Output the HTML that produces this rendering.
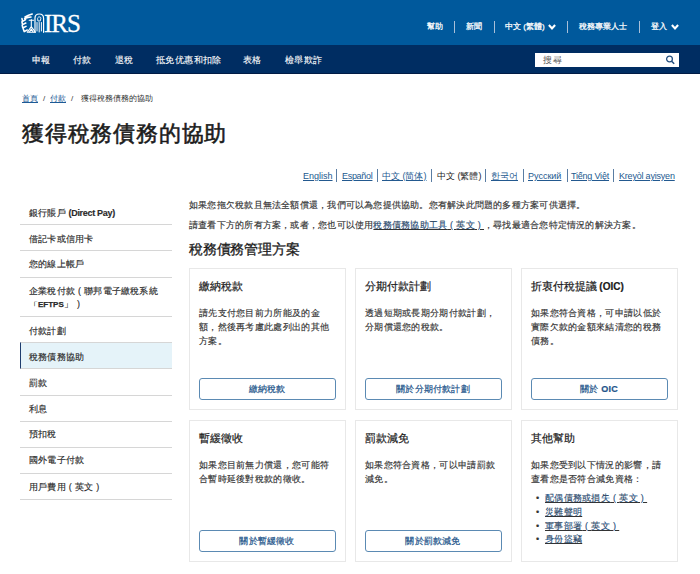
<!DOCTYPE html>
<html lang="zh-Hant">
<head>
<meta charset="utf-8">
<style>
*{box-sizing:border-box;margin:0;padding:0}
html,body{width:700px;height:574px;overflow:hidden;background:#fff}
body{font-family:"Liberation Sans",sans-serif;color:#1b1b1b;position:relative}
.a{position:absolute;white-space:nowrap;line-height:1}
.fw{letter-spacing:0.4px}
#hdr{position:absolute;left:0;top:0;width:700px;height:45px;background:#00599c}
#nav{position:absolute;left:0;top:45px;width:700px;height:29px;background:#002d62;border-bottom:1px solid #001b45}
.hl{color:#fff;font-size:8px;top:23px;-webkit-text-stroke:0.25px #fff}
.sep{position:absolute;top:21px;width:1px;height:12px;background:#a9bfd8}
.nl{color:#fff;font-size:9px;letter-spacing:0.4px;top:56px;-webkit-text-stroke:0.1px #fff}
#search{position:absolute;left:535px;top:53px;width:144px;height:14px;background:#fff}
.bc{font-size:8px;top:95px;color:#333}
.lnk{color:#1d5a96;text-decoration:underline;text-underline-offset:1px}
#title{left:22px;top:123px;font-size:22px;letter-spacing:0.8px;color:#1b1b1b;-webkit-text-stroke:0.55px #1b1b1b}
.lang{top:172px;font-size:9px;color:#23598f;text-decoration:underline}
.lsep{position:absolute;top:169px;width:1px;height:13px;background:#5a7da3}
.sl{position:absolute;left:20px;width:152px;height:1px;background:#d6d6d6}
.si{left:29px;font-size:9px;letter-spacing:0.2px;color:#2a2a2a;-webkit-text-stroke:0.15px #2a2a2a}
.p{font-size:9px;letter-spacing:0.22px;color:#333;-webkit-text-stroke:0.15px #333}
.card{position:absolute;width:157px;height:142px;border:1px solid #e8e8e8;background:#fff}
.ct{position:absolute;left:9px;top:11.5px;font-size:11px;letter-spacing:-0.1px;line-height:1;color:#1b1b1b;white-space:nowrap;-webkit-text-stroke:0.2px #1b1b1b}
.cb{position:absolute;left:9px;top:38px;font-size:9px;letter-spacing:0.3px;line-height:13.8px;color:#333;white-space:nowrap;-webkit-text-stroke:0.15px #333}
.btn{position:absolute;left:8.5px;top:109px;width:137px;height:22px;border:1.5px solid #5b8ab3;border-radius:3px;font-size:9px;letter-spacing:0.2px;color:#22548a;text-align:center;line-height:21px;-webkit-text-stroke:0.2px #22548a}
</style>
</head>
<body>
<div id="hdr"></div>
<div id="nav"></div>

<!-- logo -->
<div class="a" style="left:44px;top:11px;-webkit-text-stroke:0.3px #fff;color:#fff;font-family:'Liberation Serif',serif;font-size:25px;line-height:1;letter-spacing:-1px">IRS</div>
<svg class="a" style="left:18px;top:10px" width="30" height="26" viewBox="18 10 30 26">
<g fill="none" stroke="#fff" stroke-linecap="round" stroke-linejoin="round">
<path d="M25 17 L28.5 15.2 L32.2 14 M24.6 18.6 L28 17.4 L31 17 M25.6 19.6 L22.6 21.4 L22 18.6 M25.8 23 L22.6 24.6 L21.9 21.8 M26 26.4 L22.8 28 L22.2 25.2 M27.2 30 L24.2 31.6 L23.2 28.8" stroke-width="1.6"/>
<path d="M29.2 20.2 L33.6 20.2 M31.3 19.6 L31.3 27 M27.3 32.3 L31.3 26.6 L35.4 32.3 Z M29.3 32.3 L31.3 29 L33.3 32.3" stroke-width="1.1"/>
<path d="M35 32.3 L35 18 C35 15.2 36.8 14 39.3 14 C41.8 14 43.6 15.4 43.6 18.5 L43.6 32.3" stroke-width="1.2"/>
<path d="M37.6 18.2 C37.6 16.4 40.9 16.4 40.9 18.2 L40.2 21 L38.3 21 Z" stroke-width="0.9"/>
<path d="M37 22.5 L37 31 M39.2 22.5 L39.2 32 M41.4 22.5 L41.4 31" stroke-width="1"/>
</g>
</svg>

<!-- header links -->
<div class="a hl" style="left:427px">幫助</div>
<div class="sep" style="left:454px"></div>
<div class="a hl" style="left:466px">新聞</div>
<div class="sep" style="left:494px"></div>
<div class="a hl" style="left:505px">中文 (繁體)</div>
<svg class="a" style="left:548px;top:24px" width="8" height="6" viewBox="0 0 8 6"><path d="M0.9 1 L4 4.4 L7.1 1" stroke="#fff" stroke-width="2.1" fill="none"/></svg>
<div class="sep" style="left:567px"></div>
<div class="a hl" style="left:579px">稅務專業人士</div>
<div class="sep" style="left:639px"></div>
<div class="a hl" style="left:651px">登入</div>
<svg class="a" style="left:671px;top:24px" width="8" height="6" viewBox="0 0 8 6"><path d="M0.9 1 L4 4.4 L7.1 1" stroke="#fff" stroke-width="2.1" fill="none"/></svg>

<!-- nav -->
<div class="a nl" style="left:32px">申報</div>
<div class="a nl" style="left:73px">付款</div>
<div class="a nl" style="left:115px">退稅</div>
<div class="a nl" style="left:156px">抵免优惠和扣除</div>
<div class="a nl" style="left:243px">表格</div>
<div class="a nl" style="left:285px">檢舉欺詐</div>
<div id="search"><span class="a" style="left:8px;top:3px;font-size:9px;letter-spacing:0.5px;color:#555">搜尋</span>
<svg class="a" style="left:130px;top:2px" width="11" height="11" viewBox="0 0 11 11"><circle cx="4.5" cy="4" r="2.9" fill="none" stroke="#234f80" stroke-width="1.3"/><path d="M6.6 6.2 L9.2 8.8" stroke="#234f80" stroke-width="1.5"/></svg>
</div>

<!-- breadcrumb -->
<div class="a bc lnk" style="left:22px">首頁</div>
<div class="a bc" style="left:43px">/</div>
<div class="a bc lnk" style="left:50px">付款</div>
<div class="a bc" style="left:71px">/</div>
<div class="a bc" style="left:81px">獲得稅務債務的協助</div>

<div class="a" id="title">獲得稅務債務的協助</div>

<!-- languages -->
<div class="a lang" style="left:303px">English</div>
<div class="lsep" style="left:336px"></div>
<div class="a lang" style="left:342px;letter-spacing:-0.3px">Español</div>
<div class="lsep" style="left:377px"></div>
<div class="a lang" style="left:382px">中文 (简体)</div>
<div class="lsep" style="left:431px"></div>
<div class="a lang" style="left:437px;color:#1b1b1b;text-decoration:none">中文 (繁體)</div>
<div class="lsep" style="left:485px"></div>
<div class="a lang" style="left:491px">한국어</div>
<div class="lsep" style="left:523px"></div>
<div class="a lang" style="left:528px">Русский</div>
<div class="lsep" style="left:567px"></div>
<div class="a lang" style="left:571px;letter-spacing:-0.2px">Tiếng Việt</div>
<div class="lsep" style="left:613px"></div>
<div class="a lang" style="left:619px;letter-spacing:-0.2px">Kreyòl ayisyen</div>

<!-- sidebar -->
<div class="a si" style="top:209px">銀行賬戶 <b style="letter-spacing:-0.3px">(Direct Pay)</b></div>
<div class="sl" style="top:224px"></div>
<div class="a si" style="top:235px">借記卡或信用卡</div>
<div class="sl" style="top:250px"></div>
<div class="a si" style="top:260px">您的線上帳戶</div>
<div class="sl" style="top:277px"></div>
<div class="a si" style="top:287px">企業稅付款<span class="fw">&nbsp;(&nbsp;</span>聯邦電子繳稅系統</div>
<div class="a si" style="top:302px">「</div><div class="a si" style="top:300.5px;left:38px;font-weight:bold;font-size:8px;letter-spacing:0px;-webkit-text-stroke:0.25px #2a2a2a">EFTPS</div><div class="a si" style="top:299.5px;left:64px">」</div><div class="a si" style="top:300px;left:74px"><span class="fw">&nbsp;)&nbsp;</span></div>
<div class="sl" style="top:316px"></div>
<div class="a si" style="top:327px">付款計劃</div>
<div style="position:absolute;left:20px;top:342px;width:152px;height:27px;background:#e5f3f9;border-top:1px solid #d6d6d6;border-bottom:1px solid #d6d6d6;border-left:1.5px solid #1e3c6e"></div>
<div class="a si" style="top:353px">稅務債務協助</div>
<div class="a si" style="top:379px">罰款</div>
<div class="sl" style="top:395px"></div>
<div class="a si" style="top:405px">利息</div>
<div class="sl" style="top:421px"></div>
<div class="a si" style="top:430px">預扣稅</div>
<div class="sl" style="top:447px"></div>
<div class="a si" style="top:456px">國外電子付款</div>
<div class="sl" style="top:473px"></div>
<div class="a si" style="top:483px">用戶費用<span class="fw">&nbsp;(&nbsp;</span>英文<span class="fw">&nbsp;)&nbsp;</span></div>
<div class="sl" style="top:499px"></div>

<!-- main -->
<div class="a p" style="left:189px;top:201px">如果您拖欠稅款且無法全額償還，我們可以為您提供協助。您有解決此問題的多種方案可供選擇。</div>
<div class="a p" style="left:189px;top:221px">請查看下方的所有方案，或者，您也可以使用<span class="lnk">稅務債務協助工具<span class="fw">&nbsp;(&nbsp;</span>英文<span class="fw">&nbsp;)&nbsp;</span></span>，尋找最適合您特定情況的解決方案。</div>
<div class="a" style="left:189px;top:242px;font-size:14px;letter-spacing:-0.2px;-webkit-text-stroke:0.3px #1b1b1b">稅務債務管理方案</div>

<div class="card" style="left:189px;top:268px"><div class="ct">繳納稅款</div><div class="cb">請先支付您目前力所能及的金<br>額，然後再考慮此處列出的其他<br>方案。</div><div class="btn">繳納稅款</div></div>
<div class="card" style="left:355px;top:268px"><div class="ct">分期付款計劃</div><div class="cb">透過短期或長期分期付款計劃，<br>分期償還您的稅款。</div><div class="btn">關於分期付款計劃</div></div>
<div class="card" style="left:521px;top:268px"><div class="ct">折衷付稅提議 <b style="font-size:10px;letter-spacing:0px">(OIC)</b></div><div class="cb">如果您符合資格，可申請以低於<br>實際欠款的金額來結清您的稅務<br>債務。</div><div class="btn">關於 <b>OIC</b></div></div>

<div class="card" style="left:189px;top:420px"><div class="ct">暫緩徵收</div><div class="cb">如果您目前無力償還，您可能符<br>合暫時延後對稅款的徵收。</div><div class="btn">關於暫緩徵收</div></div>
<div class="card" style="left:355px;top:420px"><div class="ct">罰款減免</div><div class="cb">如果您符合資格，可以申請罰款<br>減免。</div><div class="btn">關於罰款減免</div></div>
<div class="card" style="left:521px;top:420px"><div class="ct">其他幫助</div><div class="cb">如果您受到以下情況的影響，請<br>查看您是否符合減免資格：</div>
<div class="cb" style="top:71px;left:14px">•<br>•<br>•<br>•</div>
<div class="cb" style="top:71px;left:23px;color:#1d5a96"><span class="lnk">配偶債務或損失<span class="fw">&nbsp;(&nbsp;</span>英文<span class="fw">&nbsp;)&nbsp;</span></span><br><span class="lnk">災難聲明</span><br><span class="lnk">軍事部署<span class="fw">&nbsp;(&nbsp;</span>英文<span class="fw">&nbsp;)&nbsp;</span></span><br><span class="lnk">身份盜竊</span></div>
</div>
</body>
</html>
